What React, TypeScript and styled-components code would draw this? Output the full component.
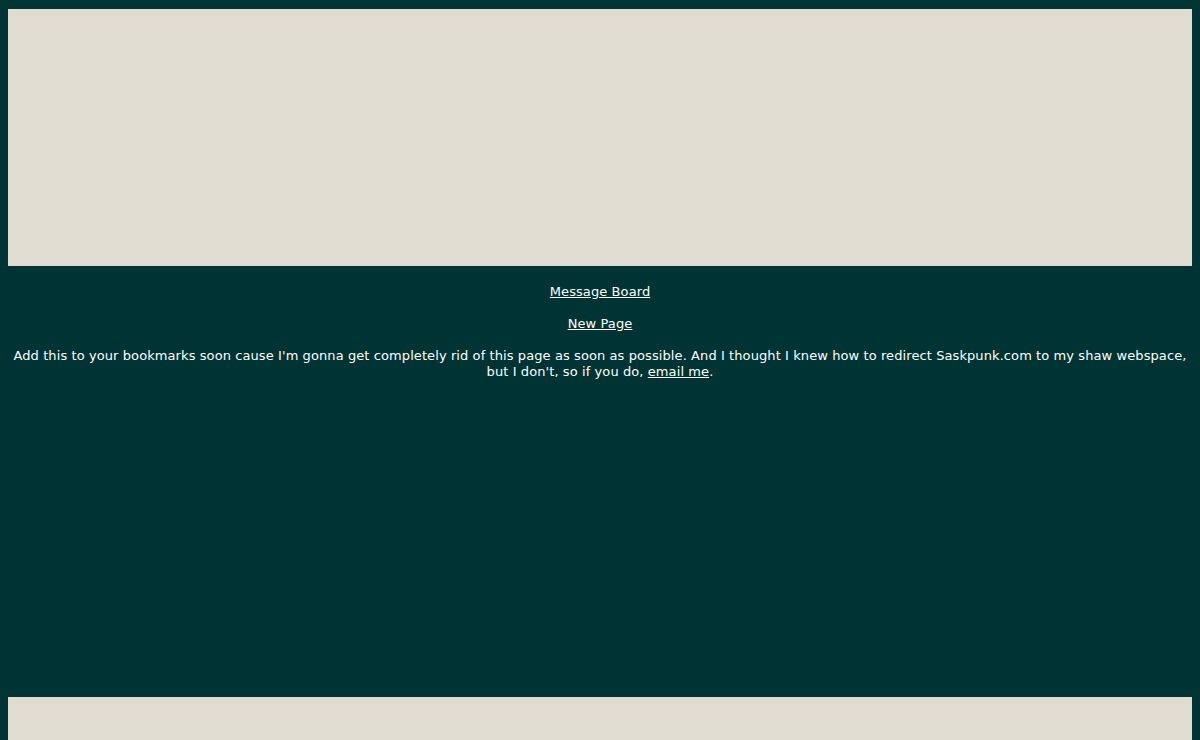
import React from "react";
import styled, { createGlobalStyle } from "styled-components";

const Global = createGlobalStyle`
  html, body { margin: 0; padding: 0; background: #003333; }
  body { font-family: Verdana, "DejaVu Sans", sans-serif; color: #ffffff; }
`;

const Page = styled.div`
  padding: 9px 8px 0;
  display: flex;
  flex-direction: column;
`;

const Banner = styled.div<{ $h: number }>`
  background: #e0dcd1;
  height: ${(p) => p.$h}px;
`;

const Content = styled.div`
  padding-top: 18px;
  padding-bottom: 317px;
  display: flex;
  flex-direction: column;
  gap: 16px;
`;

const Para = styled.p`
  margin: 0;
  text-align: center;
  font-size: 13px;
  line-height: 16px;
  letter-spacing: 0.09px;
`;

const Link = styled.a`
  color: #ffffff;
  text-decoration: underline;
`;

export default function App() {
  return (
    <>
      <Global />
      <Page>
        <Banner $h={257} />
        <Content>
          <Para>
            <Link href="#">Message Board</Link>
          </Para>
          <Para>
            <Link href="#">New Page</Link>
          </Para>
          <Para>
            Add this to your bookmarks soon cause I'm gonna get completely rid of this page as soon as possible. And I thought I knew how to redirect Saskpunk.com to my shaw webspace, but I don't, so if you do, <Link href="#">email me</Link>.
          </Para>
        </Content>
        <Banner $h={43} />
      </Page>
    </>
  );
}
